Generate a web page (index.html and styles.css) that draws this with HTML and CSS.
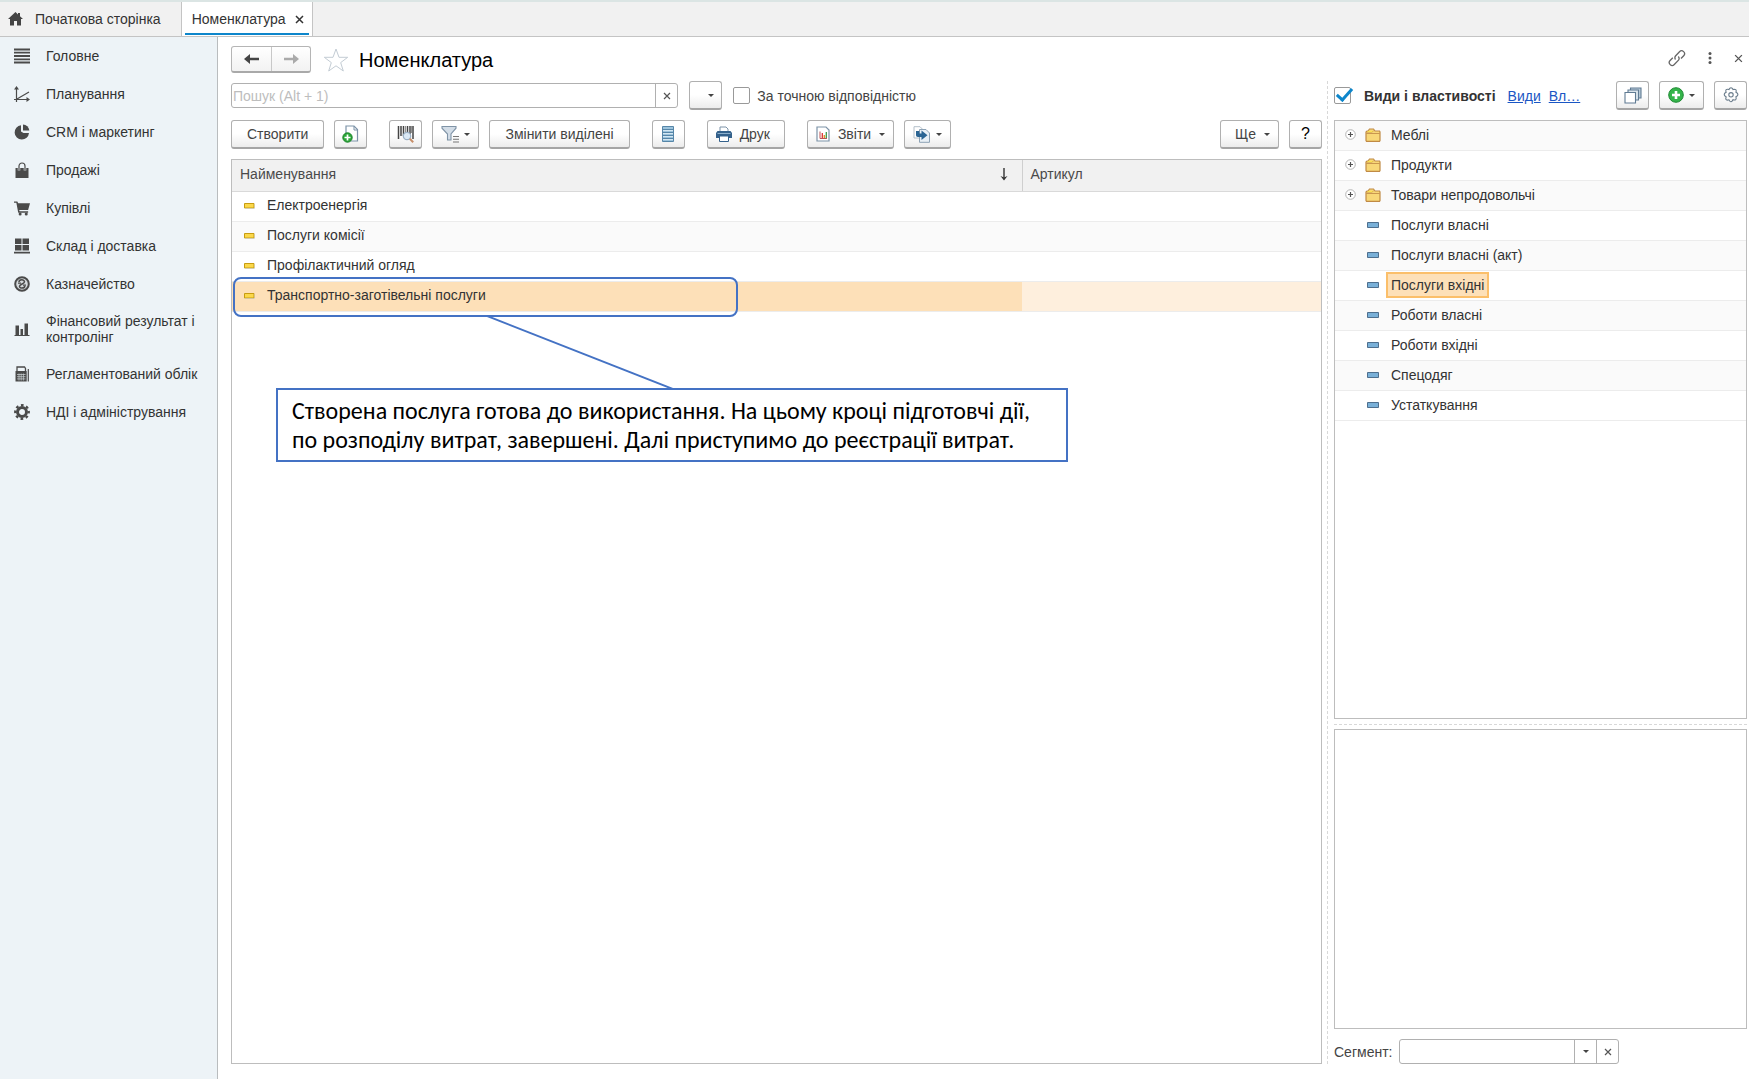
FILE: index.html
```html
<!DOCTYPE html>
<html lang="uk">
<head>
    <meta charset="UTF-8">
    <meta name="viewport" content="width=device-width, initial-scale=1.0">
    <title>Номенклатура</title>
    <link rel="stylesheet" href="styles.css">
</head>
<body>
    <!-- Shared icons -->
    <svg class="sprite" aria-hidden="true">
        <symbol id="folder" viewBox="0 0 16 14">
            <path d="M1 12.5V4l1-1h1l1.5-2h4L10 3h4.5l.5 1v8.5l-.5.8h-13z" fill="#f8d878" stroke="#c08a45" stroke-width="1.2"/>
            <path d="M2 4h5l1.5-1M1 5.5h14" fill="none" stroke="#c9974e"/>
            <path d="M2.5 3.4h5" stroke="#fde94e"/>
        </symbol>
        <symbol id="plus" viewBox="0 0 11 11">
            <circle cx="5.5" cy="5.5" r="4.8" fill="#fff" stroke="#b5b5b5"/>
            <path d="M5.5 3v5M3 5.5h5" stroke="#555" stroke-width="1.2"/>
        </symbol>
        <symbol id="item-blue" viewBox="0 0 12 6">
            <path d="M.5.5h11v5H.5z" fill="#79b0d8" stroke="#4e6f8e"/>
        </symbol>
        <symbol id="item-yellow" viewBox="0 0 11 6">
            <path d="M.5.5h9.5v4.5H.5z" fill="#fbd84a" stroke="#c79c12"/>
            <path d="M1 5.7h10V1" fill="none" stroke="#c5ccd4" stroke-width=".6"/>
        </symbol>
        <symbol id="cross" viewBox="0 0 8 8">
            <path d="M1 1l6 6M7 1L1 7" stroke="#555" stroke-width="1.2"/>
        </symbol>
    </svg>

    <nav class="tabs">
        <a class="tab" href="#">
            <svg width="15" height="14" viewBox="0 0 15 14"><path d="M7.5 0L0 7h2v6.5h4V9h3v4.5h4V7h2l-3-2.8V1h-2v1.4z" fill="#444"/></svg>
            Початкова сторінка
        </a>
        <div class="tab active">
            <span>Номенклатура</span>
            <button class="icon-btn" aria-label="Закрити вкладку">
                <svg width="9" height="9" viewBox="0 0 9 9"><path d="M1 1l7 7M8 1L1 8" stroke="#333" stroke-width="1.5"/></svg>
            </button>
        </div>
    </nav>

    <div class="layout">
        <aside class="sidebar">
            <a href="#">
                <svg viewBox="0 0 16 16"><path d="M0 1.5h16M0 4.7h16M0 8h16M0 11.3h16M0 14.5h16" stroke="#4a4a4a" stroke-width="1.8"/></svg>
                Головне
            </a>
            <a href="#">
                <svg viewBox="0 0 16 16"><path d="M2.5 16V2M0 13.5h14M3 13l12-7" fill="none" stroke="#4a4a4a" stroke-width="1.2"/><path d="M0 3.5L2.5 0 5 3.5zM12.5 11v5l3.5-2.5z" fill="#4a4a4a"/></svg>
                Планування
            </a>
            <a href="#">
                <svg viewBox="0 0 16 16"><path d="M7 1.2A7.2 7.2 0 1 0 15 9H9.5L7 7.5z" fill="#4a4a4a"/><path d="M9 .5V6.5h6.3A6.5 6.5 0 0 0 9 .5z" fill="#4a4a4a"/></svg>
                CRM і маркетинг
            </a>
            <a href="#">
                <svg viewBox="0 0 16 16"><path d="M1.5 6h13v10h-13z" fill="#4a4a4a"/><path d="M5 8.5V4a3 3 0 0 1 6 0v4.5" fill="none" stroke="#edf3f7" stroke-width="2.5"/><path d="M5 8.5V4a3 3 0 0 1 6 0v4.5" fill="none" stroke="#4a4a4a" stroke-width="1.2"/></svg>
                Продажі
            </a>
            <a href="#">
                <svg viewBox="0 0 17 16"><path d="M0 1h3.5l1 2H17l-2 7H5.5l.5 1.5h9V13H4.5L2.5 2.5H0z" fill="#4a4a4a"/><circle cx="6.5" cy="14.3" r="1.6" fill="#4a4a4a"/><circle cx="13" cy="14.3" r="1.6" fill="#4a4a4a"/></svg>
                Купівлі
            </a>
            <a href="#">
                <svg viewBox="0 0 16 16"><path d="M1 .5h6.5v5.5H1zM8.5.5H15v5.5H8.5zM1 7h6.5v5.5H1zM8.5 7H15v5.5H8.5zM0 13.8h16v1.7H0z" fill="#4a4a4a"/></svg>
                Склад і доставка
            </a>
            <a href="#">
                <svg viewBox="0 0 16 16"><circle cx="8" cy="8" r="6.8" fill="#d5dadd" stroke="#4a4a4a" stroke-width="2"/><path d="M5 6C5 3.2 10.5 3 10.5 5.8 10.5 8 5.5 8 5.5 10.3c0 2.5 5 2.3 5.5-.3" fill="none" stroke="#4a4a4a" stroke-width="1.5"/><path d="M4 7.2h3M9 9.2h3" stroke="#4a4a4a" stroke-width="1.2"/></svg>
                Казначейство
            </a>
            <a href="#">
                <svg viewBox="0 0 16 16"><path d="M.5 14.5h15" stroke="#4a4a4a"/><path d="M1.5 4.5H5V14H1.5zM6.5 8H9v6H6.5zM10.5 2.5H14V14h-3.5z" fill="#4a4a4a"/></svg>
                Фінансовий результат і контролінг
            </a>
            <a href="#">
                <svg viewBox="0 0 16 16"><path d="M3 5V1h7.5l1 1.5V5" fill="none" stroke="#4a4a4a" stroke-width="1.3"/><path d="M1.5 5h11.2v10.5H1.5z" fill="#4a4a4a"/><path d="M3 8.5h8.5M3 10.7h8.5M3 12.9h8.5M5 7.5v7M7.2 7.5v7M9.4 7.5v7" stroke="#cfd5d8" stroke-width=".7"/><path d="M14.3 3v12.5" stroke="#4a4a4a" stroke-width="1.2"/></svg>
                Регламентований облік
            </a>
            <a href="#">
                <svg viewBox="0 0 16 16"><circle cx="8" cy="8" r="4.5" fill="none" stroke="#4a4a4a" stroke-width="3"/><circle cx="8" cy="8" r="6.8" fill="none" stroke="#4a4a4a" stroke-width="2.2" stroke-dasharray="2.7 2.64" stroke-dashoffset="1.3"/></svg>
                НДІ і адміністрування
            </a>
        </aside>

        <main class="content">
            <header class="title-row">
                <div class="history">
                    <button aria-label="Назад"><svg width="16" height="12" viewBox="0 0 16 12"><path d="M5 6h10" stroke="#444" stroke-width="2.5"/><path d="M0 6l6-5v10z" fill="#444"/></svg></button>
                    <button aria-label="Вперед"><svg width="16" height="12" viewBox="0 0 16 12"><path d="M1 6h10" stroke="#aaa" stroke-width="2.5"/><path d="M16 6l-6-5v10z" fill="#aaa"/></svg></button>
                </div>
                <button class="icon-btn" aria-label="Додати в обране">
                    <svg width="26" height="26" viewBox="0 0 26 26"><path d="M13 2l3 8.3h8.7l-7 5.3 2.6 8.4-7.3-5.2L5.7 24l2.6-8.4-7-5.3H10z" fill="#fff" stroke="#c3ccd4"/></svg>
                </button>
                <h1>Номенклатура</h1>
                <div class="window-actions">
                    <button class="icon-btn" aria-label="Посилання">
                        <svg width="18" height="18" viewBox="0 0 18 18" fill="none" stroke="#666" stroke-width="1.3"><path d="M7.5 10.5a3 3 0 0 1 0-3.5l4-4.3a2.9 2.9 0 0 1 4.2 4L13 9.5"/><path d="M10.3 7.5a3 3 0 0 1 .2 3.7l-4.2 4.3a2.9 2.9 0 0 1-4.2-4L4.8 8.7"/></svg>
                    </button>
                    <button class="icon-btn" aria-label="Меню">
                        <svg width="4" height="12" viewBox="0 0 4 12" fill="#555"><circle cx="2" cy="1.6" r="1.5"/><circle cx="2" cy="6" r="1.5"/><circle cx="2" cy="10.4" r="1.5"/></svg>
                    </button>
                    <button class="icon-btn" aria-label="Закрити"><svg width="9" height="9"><use href="#cross"/></svg></button>
                </div>
            </header>

            <div class="columns">
                <section class="list-side">
                    <div class="search-row">
                        <div class="field search">
                            <input type="text" placeholder="Пошук (Alt + 1)" aria-label="Пошук">
                            <button aria-label="Очистити"><svg width="8" height="8"><use href="#cross"/></svg></button>
                        </div>
                        <button class="btn history-btn" aria-label="Історія пошуку"><span class="caret"></span></button>
                        <input type="checkbox" id="exact" class="check">
                        <label for="exact">За точною відповідністю</label>
                    </div>

                    <div class="toolbar">
                        <div class="group">
                            <button class="btn wide">Створити</button>
                            <button class="btn icon" aria-label="Створити копіюванням">
                                <svg width="18" height="18" viewBox="0 0 18 18"><path d="M4 1h8l3.5 3.5V16H4z" fill="#fff" stroke="#7d93a8" stroke-width="1.2"/><path d="M12 1v4h3.5" fill="none" stroke="#7d93a8"/><circle cx="5.5" cy="12.5" r="4.7" fill="#2aa637" stroke="#1b8429"/><path d="M5.5 9.5v6M2.5 12.5h6" stroke="#fff" stroke-width="1.7"/></svg>
                            </button>
                        </div>
                        <div class="group">
                            <button class="btn icon" aria-label="Пошук за штрихкодом">
                                <svg width="18" height="18" viewBox="0 0 18 18"><path d="M1.5 1v13M4 1v10M6.5 1v10M10.5 1v6M13 1v8M16 1v13" stroke="#444" stroke-width="1.5"/><path d="M8.5 1v8M14.5 1v7" stroke="#777" stroke-width=".8"/><circle cx="10" cy="11" r="3.7" fill="#dbe9f5" stroke="#9bb0c4" stroke-width="1.2"/><path d="M12.8 13.8l3.4 3.4" stroke="#c78f6a" stroke-width="2"/></svg>
                            </button>
                            <button class="btn menu" aria-label="Фільтр">
                                <svg width="18" height="18" viewBox="0 0 18 18"><path d="M1 1.5h14v1.7L10 9v6H6.5V9L1 3.2z" fill="#d3dde7" stroke="#7f93a6" stroke-width="1.1"/><path d="M12 11.5h6M12 14.2h6M12 17h6" stroke="#777" stroke-width="1.1"/></svg>
                                <span class="caret"></span>
                            </button>
                            <button class="btn wide">Змінити виділені</button>
                        </div>
                        <div class="group">
                            <button class="btn icon" aria-label="Список">
                                <svg width="12" height="16" viewBox="0 0 12 16"><path d="M.5.5h11v15H.5z" fill="#9cc3dc" stroke="#5686a8"/><path d="M1 3.5h10M1 6.5h10M1 9.5h10M1 12.5h10" stroke="#5686a8"/><path d="M1 4.5h10M1 7.5h10M1 10.5h10M1 13.5h10" stroke="#d4e7f2"/></svg>
                            </button>
                        </div>
                        <div class="group">
                            <button class="btn print">
                                <svg width="16" height="16" viewBox="0 0 16 16"><path d="M4 5V1h6l2 2v2" fill="#fff" stroke="#7d93a8"/><path d="M1.5 5h13l1.5 2v5H0V7z" fill="#34618b"/><path d="M1.5 7.5h13" stroke="#8db0cc"/><path d="M3.5 10h9v5.5h-9z" fill="#fff" stroke="#34618b"/></svg>
                                Друк
                            </button>
                        </div>
                        <div class="group">
                            <button class="btn menu">
                                <svg width="14" height="16" viewBox="0 0 14 16"><path d="M1 1h9l3 3v11H1z" fill="#fff" stroke="#7d93a8" stroke-width="1.2"/><path d="M4 5.5v7h7" fill="none" stroke="#b55"/><path d="M6.3 12V7" stroke="#d33" stroke-width="1.3"/><path d="M8.3 12V9" stroke="#e08a1c" stroke-width="1.3"/><path d="M10.3 12V6" stroke="#3b9a4a" stroke-width="1.3"/></svg>
                                <span class="btn-text">Звіти</span>
                                <span class="caret"></span>
                            </button>
                            <button class="btn menu" aria-label="Обмін">
                                <svg width="18" height="17" viewBox="0 0 18 17"><path d="M1 .7h6l2.5 2.5V12H1z" fill="#fff" stroke="#b4c0cb"/><path d="M6.5 3.5h6.5l3.5 3.5V16.3h-10z" fill="#e9f0f6" stroke="#8da2b5"/><path d="M3 5v4c0 1.2.6 2 2 2h3.5v3l6-4.7-6-4.8v3H6.3V5z" fill="#2b6594"/></svg>
                                <span class="caret"></span>
                            </button>
                        </div>
                        <div class="group right">
                            <button class="btn more">Ще <span class="caret"></span></button>
                            <button class="btn icon help">?</button>
                        </div>
                    </div>

                    <div class="list-box">
                        <table class="items">
                            <thead>
                                <tr>
                                    <th>
                                        <div class="sorted">
                                            Найменування
                                            <svg width="8" height="13" viewBox="0 0 8 13"><path d="M4 0v10" stroke="#333" stroke-width="1.4"/><path d="M.5 8L4 12.5 7.5 8 4 9.5z" fill="#333"/></svg>
                                        </div>
                                    </th>
                                    <th class="article">Артикул</th>
                                </tr>
                            </thead>
                            <tbody>
                                <tr><td><svg class="mark"><use href="#item-yellow"/></svg>Електроенергія</td><td></td></tr>
                                <tr><td><svg class="mark"><use href="#item-yellow"/></svg>Послуги комісії</td><td></td></tr>
                                <tr><td><svg class="mark"><use href="#item-yellow"/></svg>Профілактичний огляд</td><td></td></tr>
                                <tr class="selected"><td><svg class="mark"><use href="#item-yellow"/></svg>Транспортно-заготівельні послуги</td><td></td></tr>
                            </tbody>
                        </table>

                        <!-- Annotation over the list -->
                        <div class="frame"></div>
                        <svg class="leader" viewBox="0 0 186 73"><path d="M0 0l186 73" stroke="#4472c4" stroke-width="2"/></svg>
                        <p class="callout">Створена послуга готова до використання. На цьому кроці підготовчі дії,<br>по розподілу витрат, завершені. Далі приступимо до реєстрації витрат.</p>
                    </div>
                </section>

                <section class="kinds-side">
                    <div class="kinds-head">
                        <input type="checkbox" id="kinds" class="check" checked>
                        <label for="kinds">Види і властивості</label>
                        <a href="#">Види</a>
                        <a href="#">Вл…</a>
                        <div class="kinds-buttons">
                            <button class="btn icon" aria-label="Копії">
                                <svg width="18" height="17" viewBox="0 0 18 17" stroke="#607b93" stroke-width="1.1"><path d="M6.5 1h10.5v10H6.5z" fill="#b9cbd9"/><path d="M4 3h10.5v10H4z" fill="#dbe5ec"/><path d="M1 5.5h10.5V16H1z" fill="#fff"/></svg>
                            </button>
                            <button class="btn menu" aria-label="Додати">
                                <svg width="16" height="16" viewBox="0 0 16 16"><circle cx="8" cy="8" r="7.3" fill="#34b44a" stroke="#1f8a35"/><path d="M8 4v8M4 8h8" stroke="#fff" stroke-width="2.6"/></svg>
                                <span class="caret"></span>
                            </button>
                            <button class="btn icon" aria-label="Налаштування">
                                <svg width="16" height="16" viewBox="0 0 16 16" fill="none" stroke="#6b7d8c" stroke-width="1.1"><path d="M6.6 1.5Q8 0 9.4 1.5L10 2.6l1.3-.4q2 0 1.9 1.9l-.3 1.2 1.2.7q1.5 1.5 0 3l-1.2.8.3 1.3q0 2-1.9 1.9l-1.3-.3-.7 1.2Q8 15.6 6.7 14l-.7-1.2-1.3.3q-2 .1-1.9-1.9l.4-1.3L2 9Q.5 7.5 2 6l1.2-.7-.4-1.2q-.1-2 1.9-1.9l1.3.4z"/><circle cx="8" cy="7.8" r="2.2"/></svg>
                            </button>
                        </div>
                    </div>

                    <ul class="tree">
                        <li><button class="icon-btn" aria-label="Розгорнути"><svg width="11" height="11"><use href="#plus"/></svg></button><svg width="16" height="14"><use href="#folder"/></svg><span>Меблі</span></li>
                        <li><button class="icon-btn" aria-label="Розгорнути"><svg width="11" height="11"><use href="#plus"/></svg></button><svg width="16" height="14"><use href="#folder"/></svg><span>Продукти</span></li>
                        <li><button class="icon-btn" aria-label="Розгорнути"><svg width="11" height="11"><use href="#plus"/></svg></button><svg width="16" height="14"><use href="#folder"/></svg><span>Товари непродовольчі</span></li>
                        <li class="leaf"><svg width="16" height="6"><use href="#item-blue"/></svg><span>Послуги власні</span></li>
                        <li class="leaf"><svg width="16" height="6"><use href="#item-blue"/></svg><span>Послуги власні (акт)</span></li>
                        <li class="leaf current"><svg width="16" height="6"><use href="#item-blue"/></svg><span>Послуги вхідні</span></li>
                        <li class="leaf"><svg width="16" height="6"><use href="#item-blue"/></svg><span>Роботи власні</span></li>
                        <li class="leaf"><svg width="16" height="6"><use href="#item-blue"/></svg><span>Роботи вхідні</span></li>
                        <li class="leaf"><svg width="16" height="6"><use href="#item-blue"/></svg><span>Спецодяг</span></li>
                        <li class="leaf"><svg width="16" height="6"><use href="#item-blue"/></svg><span>Устаткування</span></li>
                    </ul>
                    <div class="splitter"></div>
                    <div class="properties"></div>

                    <div class="segment-row">
                        <label for="segment">Сегмент:</label>
                        <div class="field segment">
                            <input type="text" id="segment">
                            <button aria-label="Вибрати"><span class="caret"></span></button>
                            <button aria-label="Очистити сегмент"><svg width="8" height="8"><use href="#cross"/></svg></button>
                        </div>
                    </div>
                </section>
            </div>
        </main>
    </div>
</body>
</html>
```
FILE: styles.css
```css
* {
    box-sizing: border-box;
}
body {
    margin: 0;
    min-height: 100vh;
    display: flex;
    flex-direction: column;
    font-family: "Liberation Sans", Arial, sans-serif;
    font-size: 14px;
    line-height: 16px;
    color: #333;
    background: #fff;
}
button, input {
    font: inherit;
    color: inherit;
}
button {
    cursor: pointer;
}
svg {
    display: block;
    flex: none;
}
.sprite {
    position: absolute;
    width: 0;
    height: 0;
}
.icon-btn {
    padding: 0;
    border: none;
    background: none;
}

/* Tabs */
.tabs {
    display: flex;
    height: 37px;
    background: #f1f1f1;
    border-top: 2px solid #dbe5e4;
    border-bottom: 1px solid #c4c4c4;
}
.tab {
    display: flex;
    align-items: center;
    gap: 12px;
    padding: 0 20px 0 8px;
    color: #333;
    text-decoration: none;
}
.tab.active {
    position: relative;
    gap: 9px;
    padding: 0 8px 0 10px;
    background: #fff;
    border-left: 1px solid #c4c4c4;
    border-right: 1px solid #c4c4c4;
}
.tab.active::after {
    content: "";
    position: absolute;
    left: 3px;
    right: 3px;
    bottom: 1px;
    height: 2px;
    background: #0d86cb;
}

/* Sidebar */
.layout {
    flex: 1;
    display: flex;
}
.sidebar {
    flex: none;
    width: 218px;
    background: #edf3f7;
    border-right: 1px solid #b9bcbe;
}
.sidebar a {
    display: flex;
    align-items: center;
    gap: 16px;
    min-height: 38px;
    padding: 10px 16px 10px 14px;
    color: #333;
    text-decoration: none;
}
.sidebar svg {
    width: 16px;
    height: 16px;
}

/* Content */
.content {
    flex: 1;
    min-width: 0;
    display: flex;
    flex-direction: column;
    gap: 8px;
    padding: 9px 2px 15px 13px;
}
.title-row {
    display: flex;
    align-items: center;
    height: 27px;
}
.title-row h1 {
    margin: 0 0 0 10px;
    font-size: 20px;
    line-height: 24px;
    font-weight: normal;
    color: #000;
}
.history {
    display: flex;
    height: 27px;
    margin-right: 12px;
    border: 1px solid #b5b5b5;
    border-bottom: 2px solid #a9a9a9;
    border-radius: 3px;
    background: linear-gradient(#fff, #f2f2f2);
}
.history button {
    display: flex;
    align-items: center;
    justify-content: center;
    width: 39px;
    padding: 0;
    border: none;
    background: none;
}
.history button + button {
    border-left: 1px solid #c8c8c8;
}
.window-actions {
    display: flex;
    align-items: center;
    gap: 22px;
    margin-left: auto;
    padding: 0 4px 3px 0;
}
.columns {
    flex: 1;
    display: flex;
}

/* Buttons and fields */
.btn {
    display: flex;
    align-items: center;
    justify-content: center;
    height: 29px;
    padding: 0 8px;
    border: 1px solid #b0b0b0;
    border-bottom: 2px solid #a5a5a5;
    border-radius: 3px;
    background: linear-gradient(#fff 50%, #ececec);
    color: #444;
    white-space: nowrap;
}
.btn.wide {
    padding: 0 15px;
}
.btn.icon {
    width: 33px;
    padding: 0;
}
.btn.menu {
    gap: 5px;
}
.btn.print {
    gap: 8px;
    padding-right: 14px;
}
.btn.more {
    gap: 8px;
    padding-left: 14px;
}
.btn.help {
    font-size: 16px;
    color: #000;
}
.btn-text {
    padding: 0 3px;
}
.caret {
    border: 3px solid transparent;
    border-top-color: #444;
    border-bottom: none;
}
.field {
    display: flex;
    height: 25px;
    border: 1px solid #b0b0b0;
    border-radius: 3px;
    background: #fff;
}
.field input {
    flex: 1;
    min-width: 0;
    padding: 0 1px;
    border: none;
    background: none;
    outline: none;
}
.field input::placeholder {
    color: #bdbdbd;
}
.field button {
    display: flex;
    align-items: center;
    justify-content: center;
    width: 22px;
    padding: 0;
    border: none;
    border-left: 1px solid #b0b0b0;
    background: none;
}
.check {
    appearance: none;
    flex: none;
    width: 17px;
    height: 17px;
    margin: 0;
    border: 1px solid #999;
    border-radius: 2px;
    background: #fff;
}
.check:checked {
    position: relative;
}
.check:checked::after {
    content: "";
    position: absolute;
    left: 5px;
    top: -3px;
    width: 6px;
    height: 13px;
    border: solid #0d86cb;
    border-width: 0 3px 3px 0;
    transform: rotate(42deg);
}

/* List */
.list-side {
    flex: 1;
    min-width: 0;
    display: flex;
    flex-direction: column;
    gap: 10px;
    padding-right: 5px;
    border-right: 1px dashed #d8d8d8;
}
.search-row {
    display: flex;
    align-items: center;
    height: 29px;
}
.search {
    width: 41%;
}
.history-btn {
    width: 33px;
    margin: 0 11px;
    padding-left: 18px;
}
.search-row label {
    margin-left: 7px;
    color: #444;
}
.toolbar {
    display: flex;
    gap: 22px;
}
.group {
    display: flex;
    gap: 10px;
}
.group.right {
    margin-left: auto;
}
.list-box {
    position: relative;
    flex: 1;
    border: 1px solid #bdbdbd;
}
.items {
    width: 100%;
    border-collapse: collapse;
    table-layout: fixed;
}
.items th {
    height: 31px;
    padding: 0 8px 2px;
    text-align: left;
    font-weight: normal;
    color: #4a4a4a;
    background: #f1f1f1;
    border-bottom: 1px solid #d9d9d9;
}
.items .article {
    width: 299px;
    border-left: 1px solid #cfcfcf;
}
.sorted {
    display: flex;
    align-items: center;
    justify-content: space-between;
    padding-right: 6px;
}
.items td {
    height: 30px;
    padding: 0 12px 2px;
    border-bottom: 1px solid #ececec;
}
.items tbody tr:nth-child(even) {
    background: #fafafa;
}
.items tbody tr.selected {
    background: #feefdd;
}
.items .selected td:first-child {
    background: #fde0b8;
}
.mark {
    display: inline-block;
    width: 11px;
    height: 6px;
    margin-right: 12px;
    vertical-align: 1px;
}

/* Annotation */
.frame {
    position: absolute;
    left: 1px;
    top: 117px;
    width: 505px;
    height: 40px;
    border: 2px solid #4472c4;
    border-radius: 8px;
}
.leader {
    position: absolute;
    left: 255px;
    top: 156px;
    width: 186px;
    height: 73px;
}
.callout {
    position: absolute;
    left: 44px;
    top: 228px;
    width: 792px;
    margin: 0;
    padding: 6px 14px;
    border: 2px solid #4472c4;
    background: #fff;
    font-family: Calibri, Carlito, Lato, "Open Sans", sans-serif;
    font-size: 24px;
    line-height: 29px;
    color: #000;
    white-space: nowrap;
}

/* Kinds and properties */
.kinds-side {
    flex: none;
    width: 419px;
    display: flex;
    flex-direction: column;
    padding-left: 6px;
}
.kinds-head {
    display: flex;
    align-items: center;
    height: 29px;
    margin-bottom: 10px;
}
.kinds-head label {
    margin: 0 12px 0 13px;
    font-weight: bold;
}
.kinds-head a {
    margin-right: 8px;
    color: #1a56c4;
}
.kinds-buttons {
    display: flex;
    gap: 10px;
    margin-left: auto;
}
.tree {
    flex: 2 1 0;
    margin: 0;
    padding: 0;
    list-style: none;
    border: 1px solid #bdbdbd;
}
.tree li {
    display: flex;
    align-items: center;
    gap: 9px;
    height: 30px;
    padding: 0 0 2px 10px;
    border-bottom: 1px solid #ececec;
}
.tree li:nth-child(odd) {
    background: #fafafa;
}
.tree span {
    margin-left: -4px;
    padding: 3px;
    border: 2px solid transparent;
}
.tree .leaf {
    padding-left: 30px;
}
.tree .current span {
    background: #fde0b8;
    border-color: #fbbf6a;
}
.splitter {
    height: 6px;
    margin-bottom: 4px;
    border-bottom: 1px dashed #d8d8d8;
}
.properties {
    flex: 1 1 0;
    border: 1px solid #bdbdbd;
}
.segment-row {
    display: flex;
    align-items: center;
    gap: 7px;
    margin-top: 10px;
    color: #444;
}
.segment {
    width: 220px;
}
```
